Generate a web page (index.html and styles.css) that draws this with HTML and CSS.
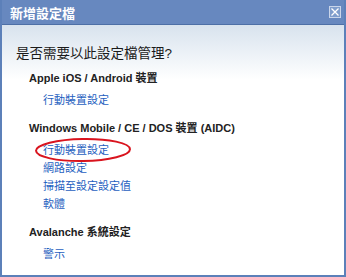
FILE: index.html
```html
<!DOCTYPE html>
<html lang="zh-Hant">
<head>
    <meta charset="UTF-8">
    <title>新增設定檔</title>
    <link rel="stylesheet" href="styles.css">
</head>
<body>
    <div class="dialog">
        <div class="titlebar">
            <span class="title">新增設定檔</span>
            <span class="close-btn">
                <svg width="8" height="8" viewBox="0 0 8 8"><path d="M0.5 0.5L7.5 7.5M7.5 0.5L0.5 7.5" stroke="#fff" stroke-width="1.3"/></svg>
            </span>
        </div>
        <div class="content">
            <h2 class="question">是否需要以此設定檔管理?</h2>

            <div class="section section-first">
                <div class="section-title">Apple iOS / Android 裝置</div>
                <ul class="links">
                    <li><a href="#">行動裝置設定</a></li>
                </ul>
            </div>

            <div class="section">
                <div class="section-title">Windows Mobile / CE / DOS 裝置 (AIDC)</div>
                <ul class="links">
                    <li class="marked">
                        <a href="#">行動裝置設定</a>
                        <svg class="circle" width="100" height="28" viewBox="0 0 100 28">
                            <ellipse cx="50" cy="13" rx="47" ry="11" fill="none" stroke="#d9141e" stroke-width="2" transform="rotate(-1 50 13)"/>
                        </svg>
                    </li>
                    <li><a href="#">網路設定</a></li>
                    <li><a href="#">掃描至設定設定值</a></li>
                    <li><a href="#">軟體</a></li>
                </ul>
            </div>

            <div class="section">
                <div class="section-title">Avalanche 系統設定</div>
                <ul class="links">
                    <li><a href="#">警示</a></li>
                </ul>
            </div>
        </div>
    </div>
</body>
</html>
```

FILE: styles.css
```css
body {
    margin: 0;
    font-family: "Liberation Sans", "Noto Sans CJK TC", sans-serif;
}

.dialog {
    height: 277px;
    box-sizing: border-box;
    border: 2px solid #5c80b9;
    border-top: 0;
    display: flex;
    flex-direction: column;
}

.titlebar {
    height: 24px;
    background-color: #6788bf;
    border-bottom: 1px solid #4d6fa6;
    display: flex;
    align-items: center;
    justify-content: space-between;
    padding: 0 3px 0 8px;
}

.title {
    color: #fff;
    font-size: 13px;
    font-weight: bold;
}

.close-btn {
    width: 10px;
    height: 10px;
    border: 1px solid #c9d5ea;
    background-color: #7f9dcc;
    display: flex;
    align-items: center;
    justify-content: center;
}

.content {
    flex: 1;
    background: linear-gradient(#d8e3ee, #fff 55px);
    padding: 20px 14px 0;
}

.question {
    margin: 0;
    font-size: 13.5px;
    font-weight: normal;
    line-height: 18px;
    color: #1a1a1a;
}

.section {
    margin: 11px 0 0 13px;
}

.section-first {
    margin-top: 7px;
}

.section-title {
    font-size: 11px;
    font-weight: bold;
    line-height: 16px;
    color: #222;
}

.links {
    list-style: none;
    margin: 5px 0 0;
    padding-left: 14px;
}

.links li {
    font-size: 11px;
    line-height: 18px;
}

.links a {
    color: #1f5fbf;
    text-decoration: none;
}

.marked {
    position: relative;
}

.circle {
    position: absolute;
    left: -10px;
    top: -4px;
}
```
